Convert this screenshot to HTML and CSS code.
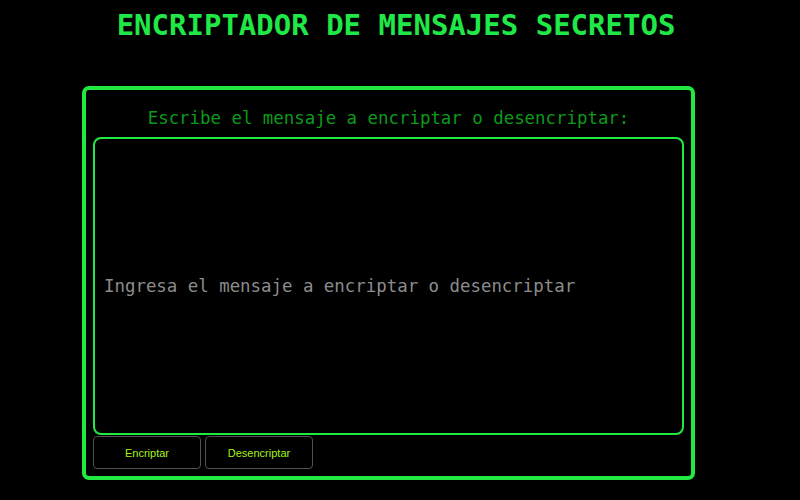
FILE: index.html
```html
<!DOCTYPE html>
<html lang="es">
<head>
<meta charset="utf-8">
<title>Encriptador</title>
<link rel="stylesheet" href="styles.css">
</head>
<body>
<h1 class="title">ENCRIPTADOR DE MENSAJES SECRETOS</h1>
<main class="panel">
  <p class="label">Escribe el mensaje a encriptar o desencriptar:</p>
  <input class="message" type="text" placeholder="Ingresa el mensaje a encriptar o desencriptar">
  <div class="actions">
    <button class="btn">Encriptar</button>
    <button class="btn">Desencriptar</button>
  </div>
</main>
</body>
</html>
```
FILE: styles.css
```css
html, body {
  margin: 0;
  padding: 0;
  background: #000;
}
body {
  width: 800px;
  height: 500px;
  overflow: hidden;
  font-family: "DejaVu Sans Mono", "Liberation Mono", monospace;
}
.title {
  margin: 0 0 0 -8px;
  padding-top: 7px;
  height: 80px;
  box-sizing: border-box;
  text-align: center;
  font-size: 29px;
  line-height: 36px;
  font-weight: bold;
  color: #1fe847;
}
.panel {
  margin: 6px 0 0 82px;
  width: 613px;
  height: 394px;
  box-sizing: border-box;
  border: 4px solid #22e842;
  border-radius: 7px;
  padding: 0 7px;
  display: flex;
  flex-direction: column;
}
.label {
  margin: 0;
  padding-top: 17px;
  height: 47px;
  box-sizing: border-box;
  text-align: center;
  font-size: 17.4px;
  line-height: 22px;
  color: #0c9a1c;
}
.message {
  width: 591px;
  height: 298px;
  box-sizing: border-box;
  margin: 0;
  background: #000;
  border: 2px solid #22e842;
  border-radius: 8px;
  padding: 0 0 0 9px;
  font-family: "DejaVu Sans Mono", "Liberation Mono", monospace;
  font-size: 17.4px;
  color: #9a9a9a;
  outline: none;
}
.message::placeholder {
  color: #8c8c8c;
}
.actions {
  display: flex;
  gap: 4px;
  margin-top: 1px;
}
.btn {
  width: 108px;
  height: 33px;
  background: #000;
  border: 1px solid #505050;
  border-radius: 4px;
  color: #a6f01a;
  font-family: "Liberation Sans", Arial, sans-serif;
  font-size: 11px;
  padding: 0;
}
```
